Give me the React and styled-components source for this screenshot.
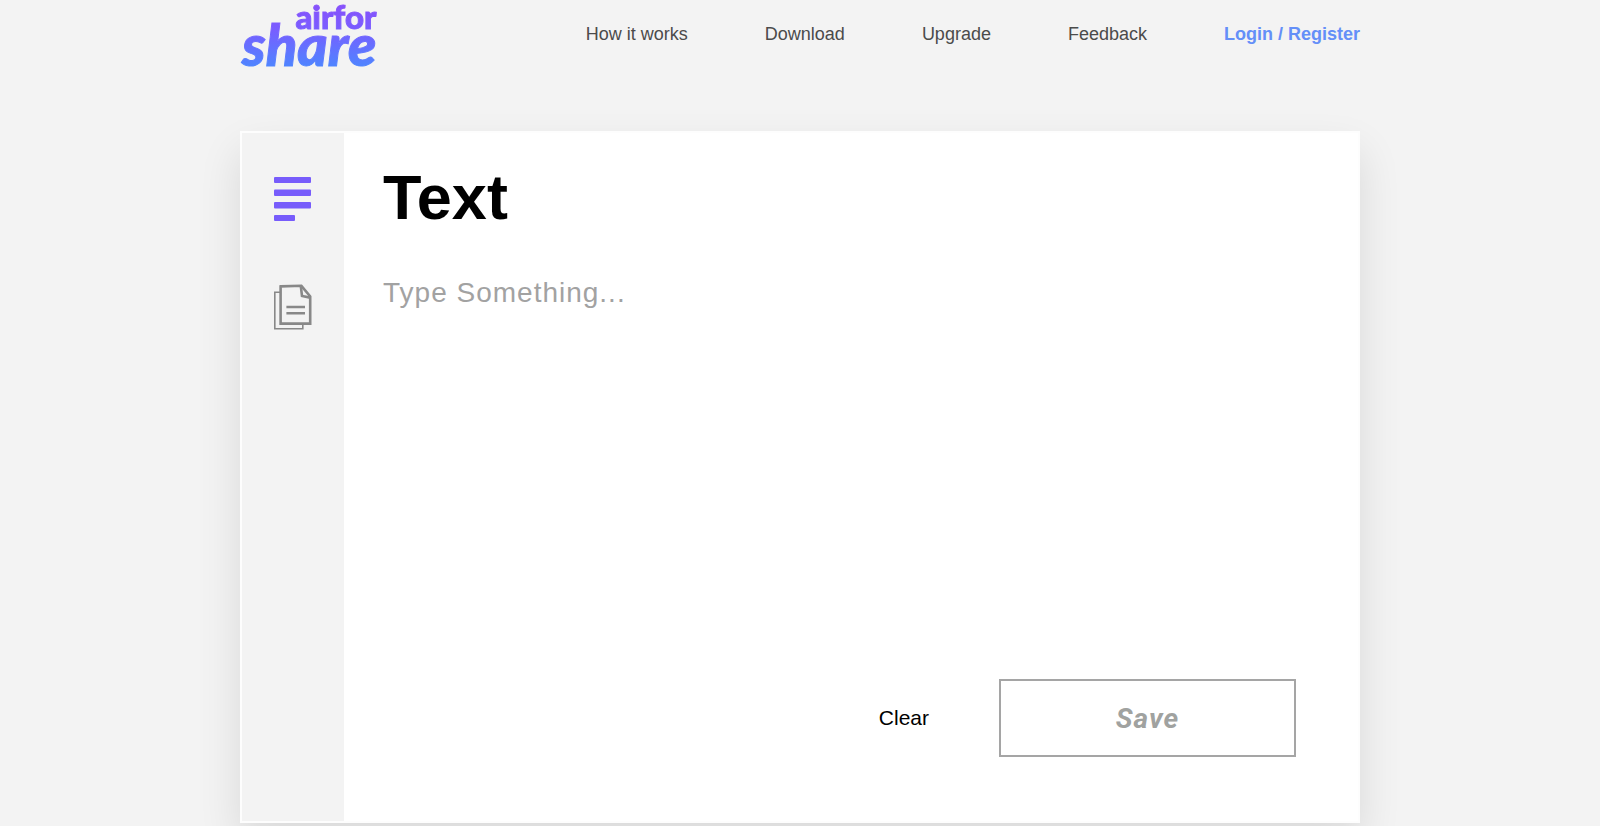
import React, { useState } from 'react';
import styled, { createGlobalStyle } from 'styled-components';

const GlobalStyle = createGlobalStyle`
  *, *::before, *::after { box-sizing: border-box; }
  body {
    margin: 0;
    background: #f3f3f3;
    font-family: "Liberation Sans", Arial, sans-serif;
    overflow-x: hidden;
  }
`;

const Page = styled.div`
  width: 70%;
  margin: 0 auto;
  padding-bottom: 3px;
`;

const Header = styled.header`
  display: flex;
  align-items: flex-start;
  justify-content: space-between;
  height: 131px;
`;

const Logo = styled.a`
  display: flex;
  flex-direction: column;
  align-items: flex-end;
  padding: 0 2px;
  font-family: Lato, sans-serif;
  font-weight: 900;
  text-decoration: none;
  color: transparent;
  -webkit-text-stroke: 1px transparent;
  background: linear-gradient(#8a4ffa 0, #7a5cff 28px, #4f84ff 66px);
  background-clip: text;
  -webkit-background-clip: text;
`;

const LogoTop = styled.span`
  font-size: 33px;
  line-height: 32px;
`;

const LogoBottom = styled.span`
  font-size: 58px;
  font-style: italic;
  line-height: 24px;
  padding-bottom: 24px;
`;

const Nav = styled.nav`
  display: flex;
  gap: 77px;
  padding-top: 23px;
`;

const NavLink = styled.a`
  font-size: 18px;
  line-height: 22px;
  text-decoration: none;
  white-space: nowrap;
  font-weight: ${(p) => (p.$accent ? 700 : 400)};
  color: ${(p) => (p.$accent ? '#648ff8' : '#4b4b4b')};
`;

const Card = styled.main`
  display: flex;
  min-height: 692px;
  border: 2px solid #fdfdfd;
  background: #fff;
  box-shadow: 0 20px 40px rgba(0, 0, 0, 0.11);
`;

const Sidebar = styled.aside`
  display: flex;
  flex-direction: column;
  align-items: center;
  gap: 63px;
  width: 102px;
  padding-top: 43px;
  background: #f3f3f3;
`;

const Tab = styled.button`
  display: flex;
  padding: 0;
  border: 0;
  background: none;
  cursor: pointer;
`;

const Editor = styled.form`
  flex: 1;
  display: flex;
  flex-direction: column;
  padding: 28px 62px 64px 39px;
`;

const Title = styled.h1`
  margin: 0;
  font-size: 63px;
  line-height: 72px;
  color: #000;
`;

const TextArea = styled.textarea`
  flex: 1;
  margin-top: 40px;
  padding: 0;
  border: 0;
  outline: 0;
  resize: none;
  background: none;
  font-family: inherit;
  font-size: 28px;
  line-height: 40px;
  letter-spacing: 1px;
  color: #222;
  &::placeholder { color: #a2a2a2; opacity: 1; }
`;

const Actions = styled.div`
  display: flex;
  align-items: center;
  justify-content: flex-end;
  gap: 70px;
`;

const ClearButton = styled.button`
  padding: 0;
  border: 0;
  background: none;
  font-family: inherit;
  font-size: 21px;
  line-height: 24px;
  color: #000;
  cursor: pointer;
`;

const SaveButton = styled.button`
  width: 297px;
  height: 78px;
  padding: 0;
  border: 2px solid #a5a5a5;
  background: #fff;
  font-family: Roboto, sans-serif;
  font-size: 28px;
  font-style: italic;
  font-weight: 700;
  letter-spacing: 1px;
  color: #a0a2a0;
  cursor: pointer;
`;

const TextIcon = () => (
  <svg width="38" height="45" viewBox="0 0 38 45" fill="#775cfb" aria-hidden="true">
    <rect x="0" y="1" width="37" height="6" rx="1" />
    <rect x="0" y="13.5" width="37" height="6.5" rx="1" />
    <rect x="0" y="26" width="37" height="6.5" rx="1" />
    <rect x="0" y="39" width="21" height="6" rx="1" />
  </svg>
);

const FilesIcon = () => (
  <svg width="38" height="46" viewBox="0 0 38 46" fill="none" stroke="#888" aria-hidden="true">
    <path d="M6 8.2H.8V44.8H28.8V40" strokeWidth="1.6" />
    <path d="M6.6 2.4L27.4 1.8L36.2 12.4V39.6H6.6Z" strokeWidth="2.6" />
    <path d="M26.8 1.8L28 12L36.2 13.6" strokeWidth="2.6" />
    <path d="M12.4 23H31M12.4 29.2H31" strokeWidth="2.6" />
  </svg>
);

const links = ['How it works', 'Download', 'Upgrade', 'Feedback'];

export default function App() {
  const [text, setText] = useState('');
  return (
    <>
      <GlobalStyle />
      <Page>
        <Header>
          <Logo href="#">
            <LogoTop>airfor</LogoTop>
            <LogoBottom>share</LogoBottom>
          </Logo>
          <Nav>
            {links.map((label) => (
              <NavLink key={label} href="#">{label}</NavLink>
            ))}
            <NavLink href="#" $accent>Login / Register</NavLink>
          </Nav>
        </Header>
        <Card>
          <Sidebar>
            <Tab type="button" aria-label="Text"><TextIcon /></Tab>
            <Tab type="button" aria-label="Files"><FilesIcon /></Tab>
          </Sidebar>
          <Editor onSubmit={(e) => e.preventDefault()}>
            <Title id="editor-title">Text</Title>
            <TextArea
              aria-labelledby="editor-title"
              placeholder="Type Something..."
              value={text}
              onChange={(e) => setText(e.target.value)}
            />
            <Actions>
              <ClearButton type="button" onClick={() => setText('')}>Clear</ClearButton>
              <SaveButton type="submit">Save</SaveButton>
            </Actions>
          </Editor>
        </Card>
      </Page>
    </>
  );
}
